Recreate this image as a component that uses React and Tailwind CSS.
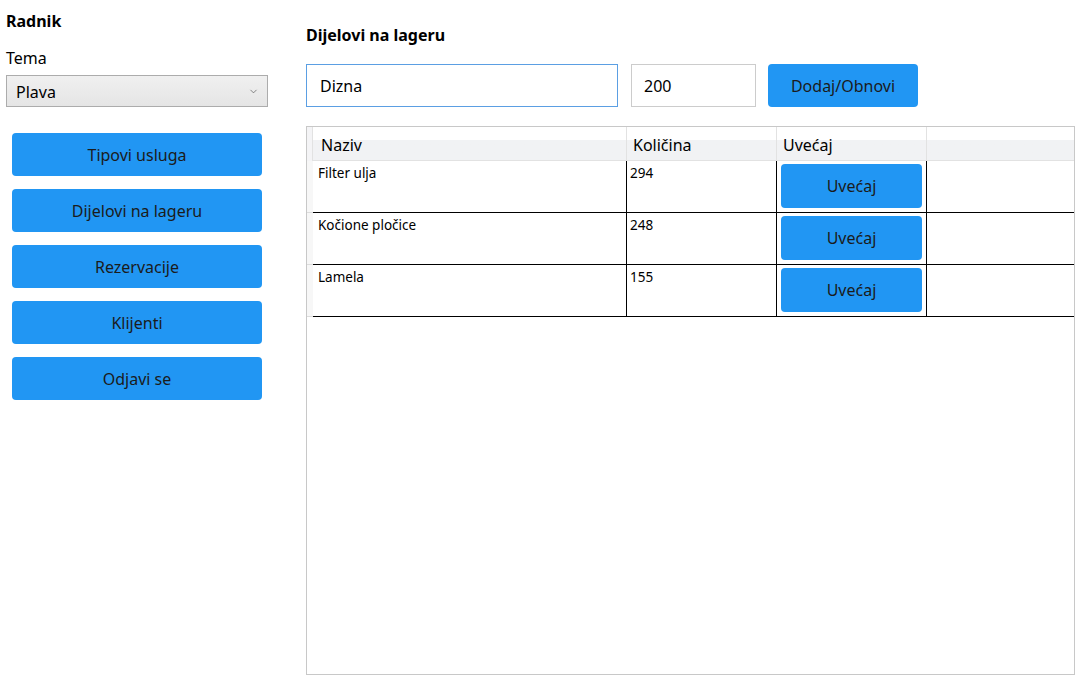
import { ChevronDown } from "lucide-react";

const font = { fontFamily: "'Noto Sans', sans-serif" };

const menu = ["Tipovi usluga", "Dijelovi na lageru", "Rezervacije", "Klijenti", "Odjavi se"];

const parts = [
  { naziv: "Filter ulja", kolicina: 294 },
  { naziv: "Kočione pločice", kolicina: 248 },
  { naziv: "Lamela", kolicina: 155 },
];

const BlueButton = ({ children, className = "" }) => (
  <button className={`bg-[#2196f3] rounded-[4px] text-[16px] text-[#1b1b1b] flex items-center justify-center ${className}`}>
    {children}
  </button>
);

export default function App() {
  return (
    <div className="w-[1085px] h-[682px] bg-white flex text-black overflow-hidden" style={font}>
      {/* Sidebar */}
      <div className="w-[300px] pl-[6px] flex flex-col">
        <div className="mt-[10px] h-[22px] leading-[22px] text-[16px] font-bold">Radnik</div>
        <div className="mt-[15px] h-[22px] leading-[22px] text-[16px]">Tema</div>
        <div className="mt-[6px] w-[262px] h-[32px] border border-[#acacac] bg-gradient-to-b from-[#f0f0f0] to-[#e5e5e5] flex items-center justify-between pl-[9px] pr-[8px] text-[16px]">
          <span className="pt-[1px]">Plava</span>
          <ChevronDown size={11} strokeWidth={1.5} className="text-[#555]" />
        </div>
        <div className="mt-[26px] ml-[6px] flex flex-col gap-[13px]">
          {menu.map((m) => (
            <BlueButton key={m} className="w-[250px] h-[43px]">{m}</BlueButton>
          ))}
        </div>
      </div>

      {/* Main */}
      <div className="ml-[6px] flex flex-col">
        <div className="mt-[24px] h-[22px] leading-[22px] text-[16px] font-bold">Dijelovi na lageru</div>
        <div className="mt-[18px] flex items-center">
          <div className="w-[312px] h-[43px] border border-[#5b9fe3] flex items-center pl-[13px] text-[16px]">Dizna</div>
          <div className="ml-[13px] w-[125px] h-[43px] border border-[#cccccc] flex items-center pl-[12px] text-[16px]">200</div>
          <BlueButton className="ml-[12px] w-[150px] h-[43px]">Dodaj/Obnovi</BlueButton>
        </div>

        <div className="mt-[19px] w-[769px] h-[549px] border border-[#c8c8c8] flex flex-col">
          {/* Header */}
          <div className="flex h-[34px]">
            <div className="w-[6px] bg-[#f4f4f6] border-r border-[#e2e2e2]" />
            {["Naziv", "Količina", "Uvećaj"].map((h, i) => (
              <div
                key={h}
                className={`${i === 0 ? "w-[314px] pl-[8px]" : "w-[150px] pl-[6px]"} border-r border-[#e2e2e2] bg-gradient-to-b from-white from-40% to-[#f1f2f4] to-40% border-b flex items-center pt-[2px] text-[16px]`}
              >
                {h}
              </div>
            ))}
            <div className="flex-1 bg-gradient-to-b from-white from-40% to-[#f1f2f4] to-40% border-b border-[#e2e2e2]" />
          </div>

          {/* Rows */}
          {parts.map((p) => (
            <div key={p.naziv} className="flex h-[52px]">
              <div className="w-[6px] bg-[#f7f7f7] border-b border-[#dcdcdc]" />
              <div className="w-[314px] border-r border-b border-black pl-[5px] pt-[3px] text-[13.5px] leading-[18px]">{p.naziv}</div>
              <div className="w-[150px] border-r border-b border-black pl-[3px] pt-[3px] text-[13.5px] leading-[18px]">{p.kolicina}</div>
              <div className="w-[150px] border-r border-b border-black pl-[4px] pr-[4px] pt-[3px] pb-[3px]">
                <BlueButton className="w-[141px] h-[44px]">Uvećaj</BlueButton>
              </div>
              <div className="flex-1 border-b border-black" />
            </div>
          ))}
          <div className="flex-1" />
        </div>
      </div>
    </div>
  );
}
